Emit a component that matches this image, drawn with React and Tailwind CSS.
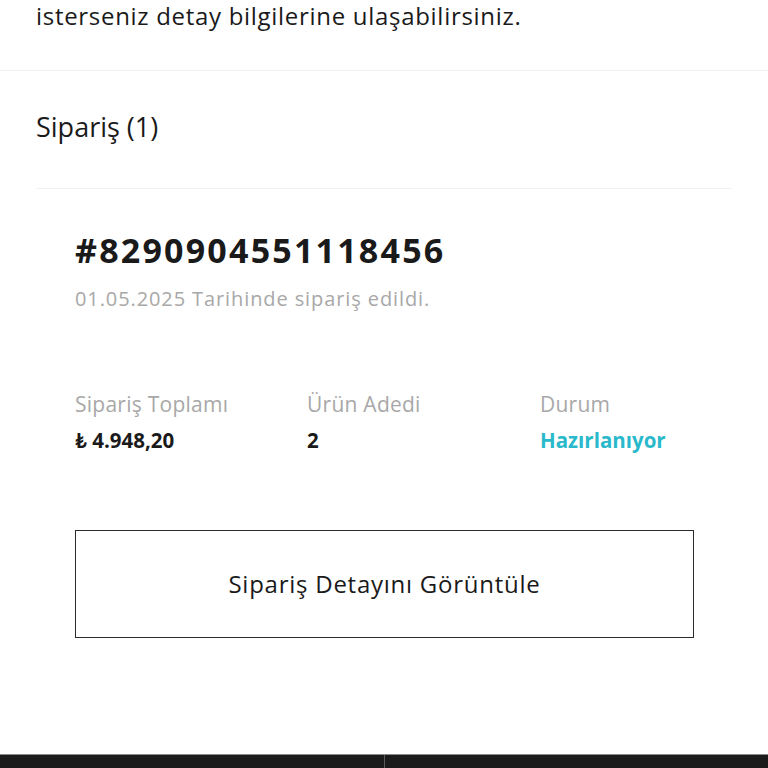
import React from "react";

const columns = [
  { label: "Sipariş Toplamı", value: "₺ 4.948,20", color: "text-[#1a1a1a]" },
  { label: "Ürün Adedi", value: "2", color: "text-[#1a1a1a]" },
  { label: "Durum", value: "Hazırlanıyor", color: "text-[#2ab9cb]" },
];

const App = () => {
  return (
    <div
      className="w-full min-h-[768px] bg-white flex flex-col text-[#1a1a1a]"
      style={{ fontFamily: "'Open Sans', Lato, sans-serif" }}
    >
      {/* Intro text */}
      <div className="px-9 pt-[2px] pb-[40px]">
        <p className="text-[24px] leading-[28px] tracking-[0.7px]">
          isterseniz detay bilgilerine ulaşabilirsiniz.
        </p>
      </div>
      <div className="h-px w-full bg-[#f2f2f2]" />

      {/* Section title */}
      <div className="px-9 pt-[40px] pb-[45px]">
        <h2 className="text-[27px] leading-[32px]">Sipariş (1)</h2>
      </div>
      <div className="mx-9 h-px bg-[#f2f2f2]" />

      {/* Order card */}
      <div className="px-[75px] pt-[41px]">
        <h3 className="text-[34px] leading-[40px] font-bold tracking-[2.2px]">
          #8290904551118456
        </h3>
        <p className="mt-[17px] text-[20px] leading-[24px] tracking-[0.9px] text-[#a8a8a8]">
          01.05.2025 Tarihinde sipariş edildi.
        </p>

        <div className="mt-[80px] grid grid-cols-[232px_233px_1fr]">
          {columns.map((c, i) => (
            <div key={i} className="flex flex-col">
              <span className="text-[21px] leading-[26px] tracking-[0.25px] text-[#a8a8a8]">
                {c.label}
              </span>
              <span
                className={`mt-[10px] text-[20.5px] leading-[26px] font-bold ${c.color}`}
              >
                {c.value}
              </span>
            </div>
          ))}
        </div>

        <div className="mt-[77px] w-[619px] h-[108px] border-[1.5px] border-[#2b2b2b] flex items-center justify-center">
          <span className="text-[24px] tracking-[0.75px]">
            Sipariş Detayını Görüntüle
          </span>
        </div>
      </div>

      {/* Bottom bar */}
      <div className="mt-[116px] h-[14px] w-full bg-[#1b1b1b] border-t border-[#8a8a8a] flex">
        <div className="flex-1" />
        <div className="w-px bg-[#5a5a5a]" />
        <div className="flex-1" />
      </div>
    </div>
  );
};

export default App;
